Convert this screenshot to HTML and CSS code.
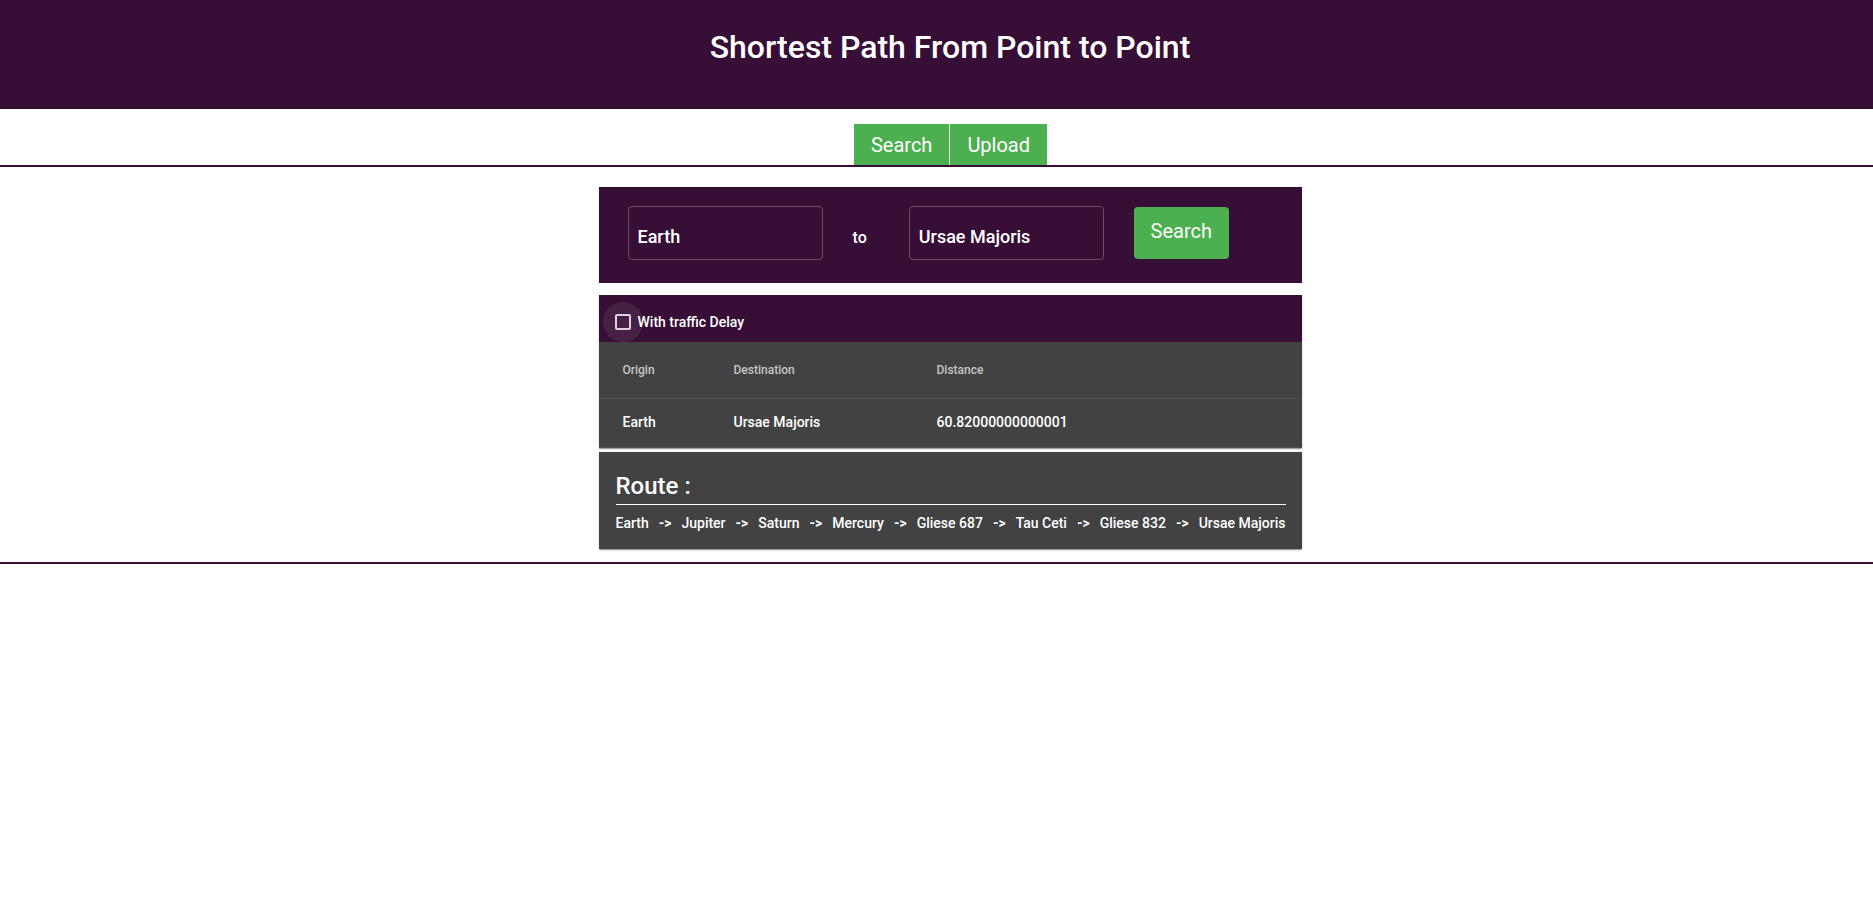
FILE: index.html
```html
<!DOCTYPE html>
<html lang="en">
<head>
<meta charset="utf-8">
<title>Shortest Path From Point to Point</title>
<link rel="stylesheet" href="styles.css">
</head>
<body>
<header class="app-header">
  <h1 class="app-title">Shortest Path From Point to Point</h1>
</header>
<nav class="tabs">
  <button class="tab">Search</button><button class="tab tab-next">Upload</button>
</nav>
<main class="content">
  <section class="search-panel">
    <input class="field" type="text" value="Earth">
    <span class="to">to</span>
    <input class="field" type="text" value="Ursae Majoris">
    <button class="go">Search</button>
  </section>
  <section class="results">
    <div class="options">
      <label class="check">
        <span class="box"><span class="ripple"></span></span>
        <span class="check-label">With traffic Delay</span>
      </label>
    </div>
    <table class="table">
      <thead>
        <tr><th class="c1">Origin</th><th class="c2">Destination</th><th class="c3">Distance</th></tr>
      </thead>
      <tbody>
        <tr><td class="c1">Earth</td><td class="c2">Ursae Majoris</td><td class="c3">60.82000000000001</td></tr>
      </tbody>
    </table>
  </section>
  <section class="route">
    <h2 class="route-title">Route :</h2>
    <hr class="route-rule">
    <div class="route-path">
      <span>Earth</span><span class="arrow">-&gt;</span>
      <span>Jupiter</span><span class="arrow">-&gt;</span>
      <span>Saturn</span><span class="arrow">-&gt;</span>
      <span>Mercury</span><span class="arrow">-&gt;</span>
      <span>Gliese 687</span><span class="arrow">-&gt;</span>
      <span>Tau Ceti</span><span class="arrow">-&gt;</span>
      <span>Gliese 832</span><span class="arrow">-&gt;</span>
      <span>Ursae Majoris</span>
    </div>
  </section>
</main>
</body>
</html>
```

FILE: styles.css
```css
* { box-sizing: border-box; }

body {
  margin: 0;
  background: #ffffff;
  font-family: Roboto, "Liberation Sans", Arial, sans-serif;
}

.app-header {
  background: #370e36;
  height: 109px;
  padding: 28px 0 0 27px;
}

.app-title {
  margin: 0;
  text-align: center;
  color: #ffffff;
  font-size: 32px;
  font-weight: 500;
  line-height: normal;
}

.tabs {
  display: flex;
  justify-content: center;
  padding: 15px 0 0 28px;
  border-bottom: 2px solid #370e36;
}

.tab {
  height: 41px;
  padding: 1px 17px 0;
  background: #4caf50;
  color: #ffffff;
  border: 0;
  font-family: Roboto, "Liberation Sans", sans-serif;
  font-size: 20px;
  font-weight: 400;
}

.tab-next { margin-left: 1px; }

.content {
  display: flex;
  flex-direction: column;
  align-items: center;
  padding: 20px 0 13px 27px;
  border-bottom: 2px solid #370e36;
}

.search-panel {
  width: 703px;
  height: 96px;
  background: #370e36;
  display: flex;
  align-items: flex-start;
  padding: 19px 0 0 29px;
}

.field {
  width: 195px;
  height: 54px;
  border: 1px solid rgba(255, 255, 255, 0.25);
  border-radius: 4px;
  background: transparent;
  color: #ffffff;
  font-family: Roboto, "Liberation Sans", sans-serif;
  font-size: 18px;
  font-weight: 500;
  padding: 6px 0 0 9px;
  outline: none;
}

.to {
  margin: 22px 42px 0 30px;
  color: #ffffff;
  font-size: 16px;
  font-weight: 500;
  line-height: normal;
}

.go {
  margin: 1px 0 0 30px;
  width: 95px;
  height: 52px;
  border: 0;
  border-radius: 4px;
  background: #4caf50;
  color: #ffffff;
  font-family: Roboto, "Liberation Sans", sans-serif;
  font-size: 20px;
  font-weight: 400;
  padding: 0 0 5px 0;
}

.results,
.route {
  width: 703px;
  background: #424242;
  box-shadow: 0 2px 1px -1px rgba(0, 0, 0, 0.2), 0 1px 1px 0 rgba(0, 0, 0, 0.14), 0 1px 3px 0 rgba(0, 0, 0, 0.12);
}

.results { margin-top: 12px; }

.options {
  height: 47px;
  background: #370e36;
  display: flex;
  align-items: center;
}

.check {
  display: flex;
  align-items: center;
  margin-left: 16px;
  padding-top: 6px;
}

.box {
  position: relative;
  width: 16px;
  height: 16px;
  border: 2px solid rgba(255, 255, 255, 0.8);
  border-radius: 2px;
  margin-right: 7px;
}

.ripple {
  position: absolute;
  left: 50%;
  top: 50%;
  width: 40px;
  height: 40px;
  margin: -20px 0 0 -20px;
  border-radius: 50%;
  background: rgba(255, 255, 255, 0.08);
}

.check-label {
  color: #ffffff;
  font-size: 14px;
  font-weight: 500;
  line-height: normal;
}

.table {
  width: 100%;
  border-collapse: collapse;
  table-layout: fixed;
}

.table th,
.table td {
  text-align: left;
  padding: 0;
  border-bottom: 1px solid #515151;
}

.table th {
  height: 56px;
  font-size: 12px;
  font-weight: 500;
  color: rgba(255, 255, 255, 0.7);
}

.table td {
  height: 49px;
  padding-bottom: 2px;
  font-size: 14px;
  font-weight: 500;
  color: #ffffff;
}

.table .c1 { width: 135px; padding-left: 24px; }
.table .c2 { width: 203px; }

.route {
  margin-top: 4px;
  padding: 0 16px 0 17px;
}

.route-title {
  margin: 20px 0 4px;
  color: #ffffff;
  font-size: 24px;
  font-weight: 500;
  line-height: normal;
}

.route-rule {
  margin: 0 0 10px;
  border: 0;
  height: 1px;
  background: #ffffff;
}

.route-path {
  display: flex;
  justify-content: space-between;
  margin-bottom: 18px;
  color: #ffffff;
  font-size: 14px;
  font-weight: 500;
  line-height: normal;
}

.arrow { font-weight: 700; }
```
